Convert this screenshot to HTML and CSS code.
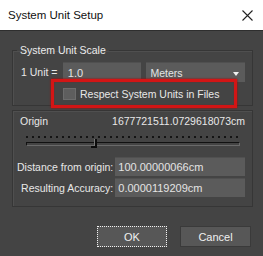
FILE: index.html
```html
<!DOCTYPE html>
<html>
<head>
<meta charset="utf-8">
<link rel="stylesheet" href="styles.css">
</head>
<body>
<div class="window">
  <div class="titlebar">
    <span class="title">System Unit Setup</span>
    <svg class="close" width="11" height="11" viewBox="0 0 11 11"><path d="M0.5 0.5 L10.5 10.5 M10.5 0.5 L0.5 10.5" stroke="#222" stroke-width="1.1" fill="none"/></svg>
  </div>
  <div class="body">
    <fieldset class="group scale">
      <legend>System Unit Scale</legend>
      <div class="unit-row">
        <span class="unit-label">1 Unit =</span>
        <div class="field unit-value">1.0</div>
        <div class="field select">Meters<span class="arrow"></span></div>
      </div>
      <div class="check-row"><span class="checkbox"></span><span>Respect System Units in Files</span></div>
    </fieldset>
    <fieldset class="group origin">
      <div class="origin-row"><span>Origin</span><span>1677721511.0729618073cm</span></div>
      <div class="slider">
        <div class="ticks"></div>
        <div class="track"></div>
        <div class="thumb"></div>
      </div>
      <div class="info-grid">
        <span class="info-label">Distance from origin:</span>
        <div class="field info">100.00000066cm</div>
        <span class="info-label">Resulting Accuracy:</span>
        <div class="field info">0.0000119209cm</div>
      </div>
    </fieldset>
    <div class="buttons">
      <button class="btn focused"><span>OK</span></button>
      <button class="btn">Cancel</button>
    </div>
  </div>
  <div class="highlight"></div>
</div>
</body>
</html>
```
FILE: styles.css
```css
* { box-sizing: border-box; }
html, body { margin: 0; padding: 0; }
body {
  font-family: "Liberation Sans", Arial, sans-serif;
  font-size: 10.5px;
  color: #e8e8e8;
  background: #444;
}
.window {
  position: relative;
  width: 263px;
  height: 256px;
  display: flex;
  flex-direction: column;
  background: #444444;
  overflow: hidden;
}
.titlebar {
  height: 31px;
  background: #ffffff;
  color: #111;
  display: flex;
  align-items: center;
  justify-content: space-between;
  padding: 0 10px 1px 8px;
  font-size: 11.5px;
  border-bottom: 1px solid #2e2e2e;
}
.close { display: block; margin-top: 1px; }
.body {
  flex: 1;
  padding: 11px 10px 0 12px;
  display: flex;
  flex-direction: column;
}
.group {
  margin: 0;
  border: 1px solid #363636;
  box-shadow: inset 1px 1px 0 #4f4f4f;
  min-width: 0;
}
.group legend {
  padding: 0 3px;
  margin-left: -4px;
  line-height: 16px;
  color: #ececec;
}
.scale { padding: 4px 7px 1px 8px; }
.unit-row {
  display: flex;
  align-items: center;
  height: 20px;
}
.unit-label { width: 42px; }
.field {
  background: #5b5b5b;
  color: #e4e4e4;
  display: flex;
  align-items: center;
  border-top: 1px solid #505050;
}
.unit-value {
  width: 79px;
  height: 20px;
  padding-left: 5px;
  font-size: 11px;
}
.select {
  margin-left: 5px;
  width: 99px;
  height: 20px;
  padding-left: 4px;
  position: relative;
}
.arrow {
  position: absolute;
  right: 6px;
  top: 9px;
  width: 0; height: 0;
  border-left: 3px solid transparent;
  border-right: 3px solid transparent;
  border-top: 4px solid #f0f0f0;
}
.check-row {
  display: flex;
  align-items: center;
  height: 20px;
  margin-top: 2px;
  padding-left: 42px;
}
.checkbox {
  width: 13px;
  height: 12px;
  background: #5e5e5e;
  border: 1px solid #6c6c6c;
  margin-right: 4px;
}
.origin {
  margin-top: 4px;
  padding: 2px 7px 9px 7px;
}
.origin-row {
  display: flex;
  justify-content: space-between;
  line-height: 16px;
}
.slider {
  position: relative;
  height: 18px;
  margin: 2px 5px 0 6px;
}
.ticks {
  position: absolute;
  left: 0; right: 0; top: 5px;
  height: 2px;
  background: repeating-linear-gradient(to right, #141414 0 2px, transparent 2px 6px);
}
.track {
  position: absolute;
  left: 0; right: 0; top: 11px;
  height: 4px;
  border-top: 1px solid #111;
  border-left: 1px solid #111;
  border-bottom: 1px solid #6a6a6a;
  border-right: 1px solid #6a6a6a;
}
.thumb {
  position: absolute;
  left: 65px;
  top: 8px;
  width: 6px;
  height: 9px;
  border-right: 2px solid #0c0c0c;
  border-bottom: 2px solid #0c0c0c;
  box-shadow: -1px 0 0 #777 inset;
}
.info-grid {
  display: grid;
  grid-template-columns: auto 1fr;
  column-gap: 2px;
  row-gap: 2px;
  margin-top: 8px;
  margin-left: -3px;
}
.info-label {
  justify-self: end;
  align-self: center;
}
.info {
  height: 19px;
  padding-left: 3px;
  font-size: 11px;
}
.buttons {
  display: flex;
  justify-content: flex-end;
  gap: 13px;
  margin-top: 19px;
  margin-right: 2px;
}
.btn {
  font-family: "Liberation Sans", Arial, sans-serif;
  font-size: 11px;
  color: #f0f0f0;
  background: #575757;
  border: 1px solid #3a3a3a;
  height: 21px;
  width: 71px;
  padding: 0;
}
.btn.focused {
  width: 70px;
  border: 1px dotted #f2f2f2;
  outline: none;
}
.highlight {
  position: absolute;
  left: 51px;
  top: 79px;
  width: 186px;
  height: 29px;
  border: 3px solid #d31515;
  box-shadow: 0 0 2px #a00, inset 0 0 1px #a00;
}
```
